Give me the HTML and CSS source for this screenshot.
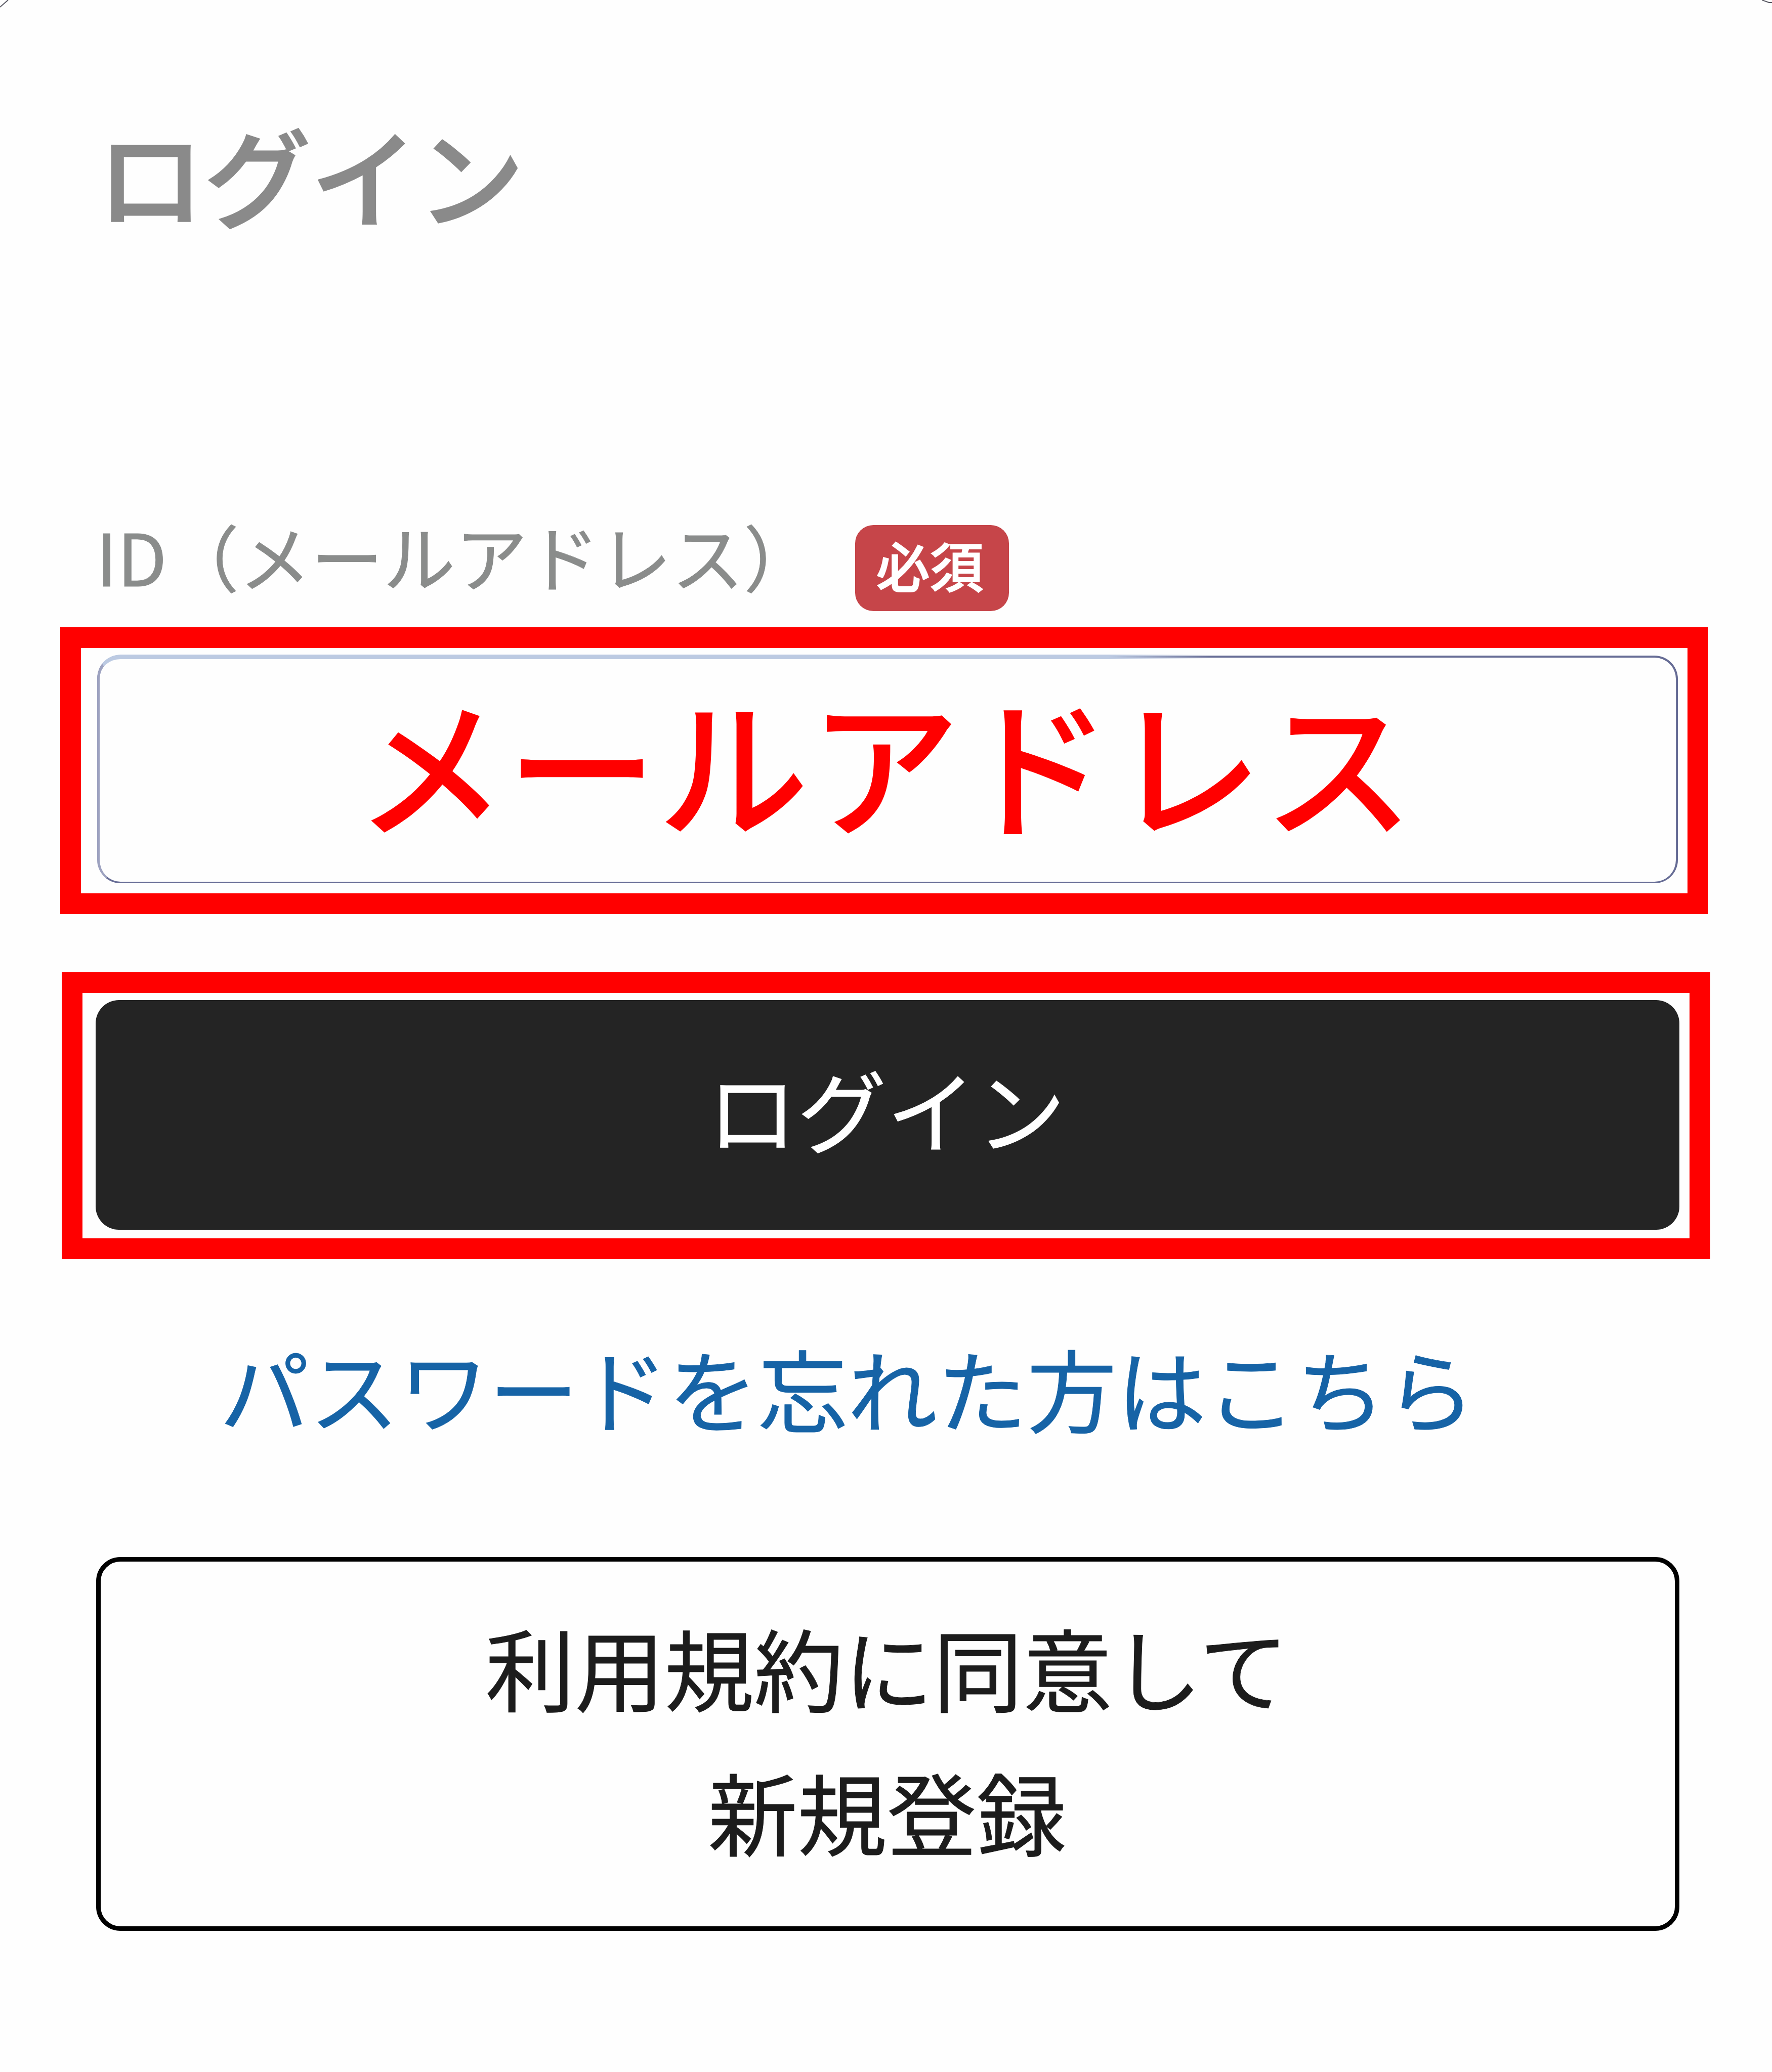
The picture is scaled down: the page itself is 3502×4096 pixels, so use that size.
FILE: index.html
```html
<!DOCTYPE html>
<html lang="ja">
<head>
    <meta charset="UTF-8">
    <meta name="viewport" content="width=device-width, initial-scale=1.0">
    <title>ログイン</title>
    <link rel="stylesheet" href="styles.css">
</head>
<body>

<svg class="corner corner-left" viewBox="0 0 20 16"><path d="M0 14 L16 0"/></svg>
<svg class="corner corner-right" viewBox="0 0 20 8"><path d="M0 0 L14 5 L20 5"/></svg>

<div class="container">
    <h1>ログイン</h1>

    <form>
        <div class="label-row">
            <label for="email">ID（メールアドレス）</label>
            <span class="required">必須</span>
        </div>
        <div class="highlight highlight-field">
            <div class="field" id="email">
                <span class="field-edge"></span>
                <span class="field-text">メールアドレス</span>
            </div>
        </div>
        <div class="highlight highlight-button">
            <button type="button" class="login-btn">ログイン</button>
        </div>
    </form>

    <a class="forgot">パスワードを忘れた方はこちら</a>

    <a class="register">利用規約に同意して<br>新規登録</a>
</div>

</body>
</html>
```

FILE: styles.css
```css
* {
    box-sizing: border-box;
}
body {
    font-family: "Noto Sans CJK JP", sans-serif;
    margin: 0;
    background-color: #fefefe;
    color: #1c1c1c;
}
.container {
    display: flex;
    flex-direction: column;
    width: 3502px;
    height: 4096px;
    overflow: hidden;
}
.corner {
    position: absolute;
    top: 0;
    fill: none;
    stroke: #555560;
    stroke-width: 2;
}
.corner-left {
    left: 0;
    width: 20px;
    height: 16px;
}
.corner-right {
    right: 0;
    width: 20px;
    height: 8px;
}
h1 {
    margin: 194px 0 0 192px;
    height: 300px;
    line-height: 298px;
    font-size: 211px;
    font-weight: 500;
    -webkit-text-stroke: 3px #8a8a8a;
    color: #8a8a8a;
}
.label-row {
    display: flex;
    margin: 526px 0 0 190px;
    height: 220px;
}
label {
    width: 1500px;
    line-height: 154px;
    font-size: 142.5px;
    color: #8a8c8b;
    -webkit-text-stroke: 1px #8a8c8b;
    white-space: nowrap;
}
.required {
    margin-top: 18px;
    width: 304px;
    height: 170px;
    line-height: 154px;
    padding-right: 9px;
    text-align: center;
    border-radius: 36px;
    background-color: #c64549;
    color: white;
    font-size: 106px;
    font-weight: 500;
    -webkit-text-stroke: 2px white;
}
.highlight {
    display: flex;
    width: 3258px;
    height: 567px;
    border: 41px solid #ff0000;
    background-color: #fefefe;
}
.highlight-field {
    width: 3257px;
    margin-left: 119px;
    padding: 15px 19px 20px 32px;
}
.highlight-button {
    margin: 115px 0 0 122px;
    padding: 14px 20px 17px 26px;
}
.field {
    position: relative;
    flex: 1;
    display: flex;
    justify-content: center;
    border: 4px solid #666c95;
    border-width: 4px 4px 3px 5px;
    border-left-color: #9da2c0;
    border-radius: 46px;
}
/* lighter, thicker stretch of the border along the top left */
.field-edge {
    position: absolute;
    top: -6px;
    left: -5px;
    width: 2240px;
    height: 60px;
    border-top: 9px solid #bccae2;
    border-left: 5px solid #9da2c0;
    border-top-left-radius: 46px;
    -webkit-mask-image: linear-gradient(to right, #000 2000px, transparent 2200px);
    mask-image: linear-gradient(to right, #000 2000px, transparent 2200px);
}
.field-text {
    line-height: 408px;
    margin-right: 13px;
    font-size: 299px;
    font-weight: 500;
    color: #ff0000;
}
.login-btn {
    flex: 1;
    border: none;
    border-radius: 46px;
    background-color: #242424;
    color: white;
    font-family: inherit;
    font-size: 177px;
    -webkit-text-stroke: 1px white;
    padding: 0 4px 28px 0;
}
.forgot {
    margin: 123px 0 0 434px;
    line-height: 260px;
    font-size: 177.3px;
    color: #1663a6;
    -webkit-text-stroke: 1px #1663a6;
}
.register {
    margin: 206px 0 0 190px;
    width: 3129px;
    height: 739px;
    padding: 65px 3px 0 0;
    border: 9px solid #000;
    border-radius: 48px;
    text-align: center;
    line-height: 285px;
    font-size: 177px;
    -webkit-text-stroke: 1px #1c1c1c;
}
```
